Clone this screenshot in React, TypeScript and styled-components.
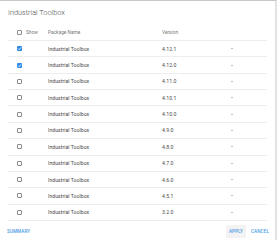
import React, { FC } from 'react';
import styled, { createGlobalStyle } from 'styled-components';

const versions = [
  { version: '4.12.1', show: true },
  { version: '4.12.0', show: true },
  { version: '4.11.0', show: false },
  { version: '4.10.1', show: false },
  { version: '4.10.0', show: false },
  { version: '4.9.0', show: false },
  { version: '4.8.0', show: false },
  { version: '4.7.0', show: false },
  { version: '4.6.0', show: false },
  { version: '4.5.1', show: false },
  { version: '3.2.0', show: false },
];

const GlobalStyle = createGlobalStyle`
  html, body {
    margin: 0;
    padding: 0;
    background: #ffffff;
  }
  body {
    font-family: Roboto, "Noto Sans", sans-serif;
  }
`;

const CheckBox: FC<{ checked: boolean }> = ({ checked }) => (
  <Box $checked={checked}>
    {checked && (
      <svg width="5" height="5" viewBox="0 0 10 10">
        <path d="M2 5.2 L4.2 7.4 L8.2 2.8" fill="none" stroke="#fff" strokeWidth="1.8" />
      </svg>
    )}
  </Box>
);

const App: FC = () => {
  return (
    <>
      <GlobalStyle />
      <Dialog>
        <Title>Industrial Toolbox</Title>
        <Table>
          <HeaderRow>
            <ShowCell>
              <CheckBox checked={false} />
              <HeaderLabel>Show</HeaderLabel>
            </ShowCell>
            <HeaderLabel>Package Name</HeaderLabel>
            <HeaderLabel>Version</HeaderLabel>
          </HeaderRow>
          {versions.map((v) => (
            <Row key={v.version}>
              <ShowCell>
                <CheckBox checked={v.show} />
              </ShowCell>
              <CellText>Industrial Toolbox</CellText>
              <VersionSelect>
                <CellText>{v.version}</CellText>
                <Arrow />
              </VersionSelect>
            </Row>
          ))}
        </Table>
        <Footer>
          <TextButton>Summary</TextButton>
          <Actions>
            <TextButton $filled>Apply</TextButton>
            <TextButton>Cancel</TextButton>
          </Actions>
        </Footer>
      </Dialog>
    </>
  );
};

const Dialog = styled.div`
  width: 277px;
  height: 240px;
  box-sizing: border-box;
  border-top: 1px solid #c6c6c6;
  border-right: 2px solid #e2e2e2;
  display: flex;
  flex-direction: column;
  overflow: hidden;
`;

const Title = styled.div`
  padding: 8px 0 0 8px;
  height: 16px;
  font-size: 7.3px;
  line-height: 8px;
  font-weight: 300;
  color: #4f4f4f;
`;

const Table = styled.div`
  margin: 0 8px 0 8px;
  display: flex;
  flex-direction: column;
`;

const HeaderRow = styled.div`
  display: grid;
  grid-template-columns: 40px 114px 1fr;
  align-items: center;
  height: 15px;
  border-bottom: 1px solid #ededed;
`;

const Row = styled.div`
  display: grid;
  grid-template-columns: 40px 114px 1fr;
  align-items: center;
  height: 15.36px;
  border-bottom: 1px solid #ededed;
`;

const ShowCell = styled.div`
  display: flex;
  align-items: center;
  gap: 4px;
  padding-left: 9px;
`;

const HeaderLabel = styled.span`
  font-size: 4.8px;
  color: #777777;
`;

const CellText = styled.span`
  font-size: 5.2px;
  color: #4a4a4a;
`;

const Box = styled.span<{ $checked: boolean }>`
  width: 5px;
  height: 5px;
  box-sizing: border-box;
  border-radius: 1px;
  border: ${({ $checked }) => ($checked ? 'none' : '0.8px solid #8a8a8a')};
  background: ${({ $checked }) => ($checked ? '#2a8ae6' : '#fff')};
  display: inline-flex;
  align-items: center;
  justify-content: center;
`;

const VersionSelect = styled.div`
  display: flex;
  align-items: center;
  justify-content: space-between;
  width: 71px;
`;

const Arrow = styled.span`
  width: 0;
  height: 0;
  border-left: 1.7px solid transparent;
  border-right: 1.7px solid transparent;
  border-top: 1.9px solid #808080;
`;

const Footer = styled.div`
  display: flex;
  align-items: center;
  justify-content: space-between;
  padding: 4px 3px 0 4px;
`;

const Actions = styled.div`
  display: flex;
  align-items: center;
  gap: 2px;
`;

const TextButton = styled.span<{ $filled?: boolean }>`
  text-transform: uppercase;
  font-size: 4.6px;
  font-weight: 500;
  letter-spacing: 0.1px;
  color: #4a9de6;
  padding: 4px 3px;
  border-radius: 1px;
  background: ${({ $filled }) => ($filled ? '#f3f3f3' : 'transparent')};
`;

export default App;
